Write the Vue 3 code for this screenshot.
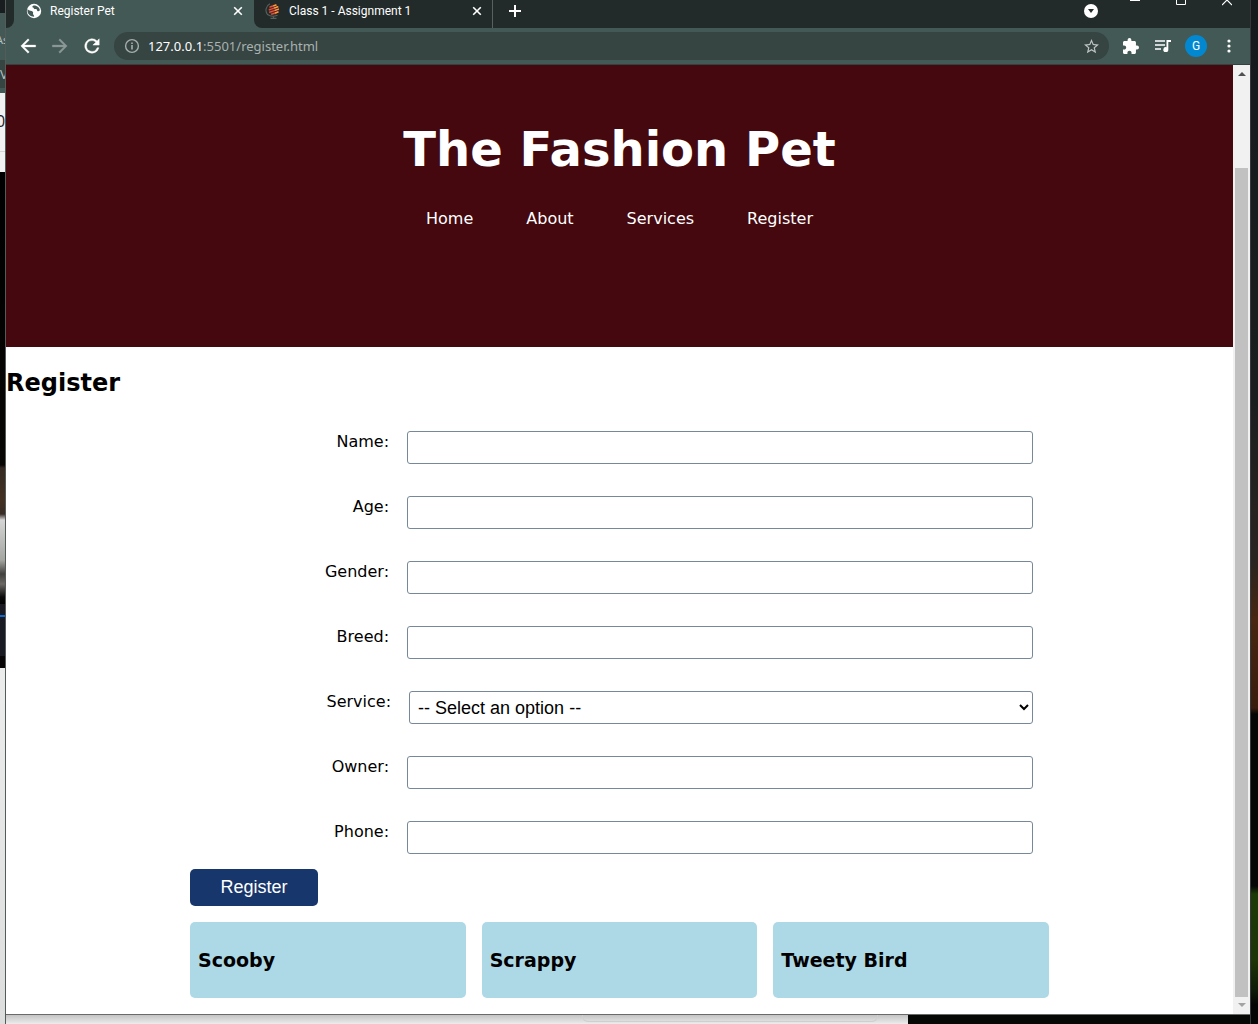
<script setup>
import { ref } from 'vue'

const links = ['Home', 'About', 'Services', 'Register']
const before = ['Name', 'Age', 'Gender', 'Breed']
const after = ['Owner', 'Phone']
const pets = ['Scooby', 'Scrappy', 'Tweety Bird']
const service = ref('')
</script>

<template>
  <div class="desktop">
    <div class="side left" aria-hidden="true">
      <span class="frag small">As</span>
      <span class="frag mid">V</span>
      <span class="frag big">0</span>
    </div>

    <div class="middle">
      <div class="window">
        <div class="tabs">
          <div class="prev-tab"></div>
          <div class="tab active">
            <svg class="fav" viewBox="0 0 16 16">
              <circle cx="8" cy="8" r="7.2" fill="#fff" />
              <path d="M1.500 6.200c1.800 1.800 4.200 1.200 5.300 2.600.8 1-.1 1.700.3 2.500.4.700 1.100 1 1 2.500C4.500 13.600 1.500 11 1.500 8zM7.500 2.400c-1.300.8-1.500 1.700-.5 2.100.9.300.7 1.300 1.500 1.600.8.300 1.200-.5 2 .1.800.700.4 1.700 1.400 2 .8.200 1.300-.3 2-.9C13.700 4.700 11.200 2.200 7.500 2.400z" fill="#435955" />
            </svg>
            <span class="tab-title">Register Pet</span>
            <button class="plain close" aria-label="Close tab">
              <svg viewBox="0 0 10 10"><path d="M1.200 1.200l7.600 7.600M8.800 1.200L1.200 8.800" stroke="#fff" stroke-width="1.600" /></svg>
            </button>
          </div>
          <div class="tab second">
            <svg class="fav" viewBox="0 0 16 16">
              <path d="M5 .8A7 7 0 0 0 2.500 11.500Q6.500 14.500 12.500 12.200M8.500 13v2M5.500 15.400h6" fill="none" stroke="#59615f" stroke-width="1.100" />
              <circle cx="8.800" cy="6.600" r="5.200" fill="#5c2a28" />
              <path d="M4.500 4.200l7-2.400M3.800 7l9.500-3.300M4.200 9.400l9.800-3.400M6.200 11.400l7.200-2.500" stroke="#e8553a" stroke-width="1.300" />
              <path d="M8.300 2.900l3-1M9.200 5.100l4-1.400M9.800 7.500l4.100-1.500M10 10.100l3.400-1.200" stroke="#f1a43a" stroke-width="1.300" />
            </svg>
            <span class="tab-title">Class 1 - Assignment 1</span>
            <button class="plain close" aria-label="Close tab">
              <svg viewBox="0 0 10 10"><path d="M1.200 1.200l7.600 7.600M8.800 1.200L1.200 8.800" stroke="#fff" stroke-width="1.600" /></svg>
            </button>
          </div>
          <button class="plain new-tab" aria-label="New tab">
            <svg viewBox="0 0 12 12"><path d="M6 0v12M0 6h12" stroke="#fff" stroke-width="2" /></svg>
          </button>
          <div class="controls">
            <button class="plain search" aria-label="Search tabs">
              <svg viewBox="0 0 14 14"><circle cx="7" cy="7" r="7" fill="#fff" /><path d="M4 5h6L7 9z" fill="#222b29" /></svg>
            </button>
            <div class="captions">
              <button class="plain" aria-label="Minimize"><svg viewBox="0 0 10 6"><path d="M0 .5h10" stroke="#fff" /></svg></button>
              <button class="plain" aria-label="Maximize"><svg viewBox="0 0 10 6"><path d="M.5-5h9v9.500h-9z" fill="none" stroke="#fff" /></svg></button>
              <button class="plain" aria-label="Close"><svg viewBox="0 0 10 6"><path d="M0-5l10 10M10-5L0 5" stroke="#fff" stroke-width="1.200" /></svg></button>
            </div>
          </div>
        </div>

        <div class="toolbar">
          <button class="plain" aria-label="Back"><svg class="nav-icon" viewBox="2 2 20 20"><path d="M20.500 11H7.830l5.590-5.590L12 4l-8 8 8 8 1.410-1.410L7.830 13H20.500z" fill="#fff" stroke="#fff" stroke-width=".4" /></svg></button>
          <button class="plain" aria-label="Forward"><svg class="nav-icon" viewBox="2 2 20 20"><path d="M12 4l-1.410 1.410L16.170 11H3.500v2h12.670l-5.580 5.590L12 20l8-8z" fill="#8b9896" stroke="#8b9896" stroke-width=".4" /></svg></button>
          <button class="plain" aria-label="Reload"><svg class="nav-icon" viewBox="2 2 20 20"><path d="M17.650 6.350A8 8 0 1 0 19.730 14h-2.080A6 6 0 1 1 12 6c1.660 0 3.140.690 4.220 1.780L13 11h7V4z" fill="#fff" stroke="#fff" stroke-width=".5" /></svg></button>
          <div class="address">
            <svg class="info" viewBox="0 0 16 16"><circle cx="8" cy="8" r="6.400" fill="none" stroke="#a5afad" stroke-width="1.400" /><path d="M8 7v4.500M8 4.500v1.500" stroke="#a5afad" stroke-width="1.600" /></svg>
            <span class="url"><b>127.0.0.1</b>:5501/register.html</span>
            <svg class="star" viewBox="2 2 20 20"><path d="M22 9.240l-7.190-.620L12 2 9.190 8.630 2 9.240l5.460 4.730L5.820 21 12 17.270 18.180 21l-1.630-7.030zM12 15.400l-3.760 2.270 1-4.280-3.320-2.880 4.380-.380L12 6.100l1.710 4.040 4.380.380-3.320 2.880 1 4.280z" fill="#bdc4c3" /></svg>
          </div>
          <div class="tools">
            <svg class="tool ext" viewBox="2 1 21 21"><path d="M20.500 11H19V7c0-1.100-.9-2-2-2h-4V3.500a2.500 2.500 0 0 0-5 0V5H4c-1.100 0-1.990.9-1.990 2v3.800H3.500c1.490 0 2.700 1.210 2.700 2.700s-1.210 2.700-2.700 2.700H2V20c0 1.100.9 2 2 2h3.800v-1.500c0-1.490 1.210-2.700 2.700-2.700s2.700 1.210 2.700 2.700V22H17c1.100 0 2-.9 2-2v-4h1.500a2.500 2.500 0 0 0 0-5z" fill="#fff" /></svg>
            <svg class="tool" viewBox="0 0 16 16"><path d="M0 3h10M0 7h10M0 11h6" stroke="#fff" stroke-width="1.600" /><path d="M11.500 2h4.500v2h-2.700v7.500A2.500 2.500 0 1 1 11.500 9.200z" fill="#fff" /></svg>
            <span class="avatar">G</span>
            <svg class="dots" viewBox="0 0 4 14"><circle cx="2" cy="2" r="1.600" fill="#fff" /><circle cx="2" cy="7" r="1.600" fill="#fff" /><circle cx="2" cy="12" r="1.600" fill="#fff" /></svg>
          </div>
        </div>

        <div class="viewport">
          <div class="page">
            <header>
              <h1>The Fashion Pet</h1>
              <nav><a v-for="l in links" :key="l" href="#">{{ l }}</a></nav>
            </header>
            <h2>Register</h2>
            <main>
              <form @submit.prevent>
                <div v-for="f in before" :key="f" class="row">
                  <label :for="f">{{ f }}:</label>
                  <input :id="f" type="text" />
                </div>
                <div class="row select-row">
                  <label for="service">Service:</label>
                  <select id="service" v-model="service">
                    <option value="">-- Select an option --</option>
                  </select>
                </div>
                <div v-for="f in after" :key="f" class="row">
                  <label :for="f">{{ f }}:</label>
                  <input :id="f" type="text" />
                </div>
                <button class="submit">Register</button>
              </form>
              <section class="pets">
                <article v-for="p in pets" :key="p"><h3>{{ p }}</h3></article>
              </section>
            </main>
          </div>
          <div class="scrollbar" aria-hidden="true">
            <svg viewBox="0 0 8 4"><path d="M0 4l4-4 4 4z" fill="#505050" /></svg>
            <div class="thumb"></div>
            <svg viewBox="0 0 8 4"><path d="M0 0l4 4 4-4z" fill="#a3a3a3" /></svg>
          </div>
        </div>
      </div>
      <div class="below"><div class="sheet"><div class="panel"></div></div></div>
    </div>

    <div class="side right"></div>
  </div>
</template>

<style>
body {
  margin: 0;
}
</style>

<style scoped>
* {
  box-sizing: border-box;
}
.desktop {
  display: flex;
  min-height: 100vh;
  overflow: hidden;
  background: #050505;
  font-family: "DejaVu Sans", Verdana, sans-serif;
}
svg {
  display: block;
  flex: none;
}
.side {
  flex: none;
  overflow: hidden;
}
.left {
  width: 6px;
  border-right: 1px solid #555b59;
  display: flex;
  flex-direction: column;
  padding-top: 30px;
  background: linear-gradient(#1a1d1f 13px, #435955 13px, #435955 60px, #364442 60px, #364442 88px, #435955 88px, #435955 93px, #f1f1f1 93px, #f1f1f1 151px, #d5d5d5 151px, #d5d5d5 152px, #f1f1f1 152px, #f1f1f1 172px, #000 172px, #080605 465px, #352a22 468px, #443022 500px, #382c25 514px, #d5d5d5 520px, #a5a5a2 560px, #41403e 574px, #6b6865 584px, #0a0a0a 597px, #000 604px, #191a22 604px, #191a22 615px, #1268d3 615px, #1268d3 617px, #191a22 617px, #191a22 656px, #080506 656px, #080506 668px, #ececec 668px, #ddd);
}
.frag {
  flex: none;
  font-family: "Open Sans", sans-serif;
  color: #bcc4c3;
  white-space: nowrap;
}
.small {
  font-size: 11px;
  line-height: 20px;
  margin-left: -4px;
}
.mid {
  font-size: 13px;
  line-height: 48px;
}
.big {
  font-size: 16px;
  line-height: 46px;
  margin-left: -4px;
  color: #1d1d2c;
}
.right {
  width: 8px;
  border-left: 1px solid #34383a;
  background: linear-gradient(#171a1c 0, #1b1e1f 400px, #2a2421 560px, #482611 620px, #3a1c0d 708px, #050505 714px, #050505 886px, #1c3a08 894px, #1d3507 960px, #101c08 990px, #050505 1005px);
}
.middle {
  flex: 1;
  min-width: 0;
  display: flex;
  flex-direction: column;
}
.window {
  flex: 1;
  display: flex;
  flex-direction: column;
  border-bottom: 1px solid #6a6a6a;
}
.below {
  height: 9px;
  flex: none;
  background: #060806;
}
.sheet {
  width: 902px;
  height: 9px;
  padding: 0 30px;
  display: flex;
  justify-content: flex-end;
  background: linear-gradient(#c4c4c4, #ececec);
}
.panel {
  width: 296px;
  height: 7px;
  border: 1px solid #cfcfcf;
  border-top: 0;
  border-radius: 0 0 6px 6px;
}

/* Browser chrome */
.plain {
  border: 0;
  padding: 0;
  background: none;
  display: flex;
  align-items: center;
  justify-content: center;
}
.tabs {
  height: 28px;
  display: flex;
  background: linear-gradient(90deg, #435955 50px, #222b29 50px);
}
.prev-tab {
  width: 8px;
  background: #222b29;
  border-radius: 0 0 8px 0;
}
.tab {
  display: flex;
  align-items: center;
  color: #fff;
  font-family: Roboto, sans-serif;
  font-size: 12px;
  padding-bottom: 6px;
}
.active {
  width: 240px;
  padding-left: 12px;
  padding-right: 11px;
  background: #435955;
}
.second {
  width: 239px;
  margin-right: 16px;
  padding-left: 11px;
  padding-right: 10px;
  border-radius: 0 0 0 8px;
  background: #222b29;
  box-shadow: -8px 0 0 #435955;
  clip-path: inset(0);
  border-right: 1px solid #58615f;
}
.fav {
  width: 16px;
  height: 16px;
  margin-right: 8px;
}
.tab-title {
  flex: 1;
  white-space: nowrap;
}
.close svg {
  width: 10px;
  height: 10px;
}
.new-tab {
  height: 22px;
}
.new-tab svg {
  width: 12px;
  height: 12px;
}
.controls {
  margin-left: auto;
  padding-right: 18px;
  display: flex;
  gap: 32px;
  height: 22px;
}
.search svg {
  width: 14px;
  height: 14px;
}
.captions {
  display: flex;
  align-items: flex-start;
  gap: 36px;
}
.captions svg {
  width: 10px;
  height: 6px;
}
.toolbar {
  height: 37px;
  display: flex;
  align-items: center;
  padding-left: 13px;
  background: #435955;
  border-bottom: 1px solid #34423f;
}
.nav-icon {
  width: 18px;
  height: 18px;
  margin-right: 14px;
}
.address {
  flex: 1;
  min-width: 0;
  height: 28px;
  margin-left: -1px;
  border-radius: 14px;
  background: #364442;
  display: flex;
  align-items: center;
  padding: 0 10px;
}
.info {
  width: 16px;
  height: 16px;
  margin-right: 8px;
}
.url {
  flex: 1;
  font-family: "Noto Sans", sans-serif;
  font-size: 13px;
  color: #a9b2b0;
}
.url b {
  font-weight: 400;
  color: #fff;
}
.star {
  width: 15px;
  height: 15px;
}
.tools {
  display: flex;
  align-items: center;
  padding: 0 19px 0 14px;
}
.tool {
  width: 16px;
  height: 16px;
  margin-right: 14px;
}
.ext {
  margin-right: 16px;
}
.avatar {
  width: 22px;
  height: 22px;
  border-radius: 50%;
  background: #0288d1;
  color: #fff;
  font: 12px/22px Roboto, sans-serif;
  text-align: center;
}
.dots {
  width: 4px;
  height: 14px;
  margin-left: 20px;
}

/* Web page */
.viewport {
  flex: 1;
  display: flex;
  background: #fff;
}
.page {
  flex: 1;
  min-width: 0;
}
header {
  height: 282px;
  padding-top: 56px;
  background: #44080e;
  color: #fff;
  text-align: center;
}
h1 {
  margin: 0;
  font-size: 48px;
  line-height: 56px;
}
nav {
  display: flex;
  justify-content: center;
  gap: 53px;
  margin-top: 32px;
}
nav a {
  color: #fff;
  text-decoration: none;
  font-size: 16px;
  line-height: 20px;
}
h2 {
  margin: 20px 0 32px;
  font-size: 24px;
  line-height: 32px;
}
main {
  width: 70%;
  margin: 0 auto;
}
.row {
  display: flex;
  gap: 16px;
  height: 33px;
  margin-bottom: 32px;
  padding-right: 16px;
}
.row:last-of-type {
  margin-bottom: 15px;
}
label {
  flex: none;
  width: 201px;
  padding-right: 2px;
  text-align: right;
  font-size: 16px;
  line-height: 22px;
}
.select-row label {
  width: 203px;
}
input,
select {
  flex: 1;
  min-width: 0;
  height: 33px;
  border: 1px solid #778899;
  border-radius: 3px;
  background: #fff;
  font: 18px "Liberation Sans", Arial, sans-serif;
  padding: 0 8px;
  color: #000;
}
select {
  padding: 0 4px;
}
.submit {
  display: block;
  width: 128px;
  height: 37px;
  border: 0;
  border-radius: 5px;
  background: #17366b;
  color: #fff;
  font: 18px "Liberation Sans", Arial, sans-serif;
}
.pets {
  display: flex;
  gap: 16px;
  padding: 16px 0;
}
article {
  flex: 1;
  height: 76px;
  padding: 0 8px;
  border-radius: 5px;
  background: #add8e6;
}
h3 {
  margin: 0;
  font-size: 19px;
  line-height: 76px;
}
.scrollbar {
  flex: none;
  width: 17px;
  display: flex;
  flex-direction: column;
  align-items: center;
  padding: 7px 0;
  background: #f1f1f1;
}
.scrollbar svg {
  width: 8px;
  height: 4px;
}
.thumb {
  flex: 1;
  width: 13px;
  margin: 92px 0 6px;
  background: #c1c1c1;
}
</style>
